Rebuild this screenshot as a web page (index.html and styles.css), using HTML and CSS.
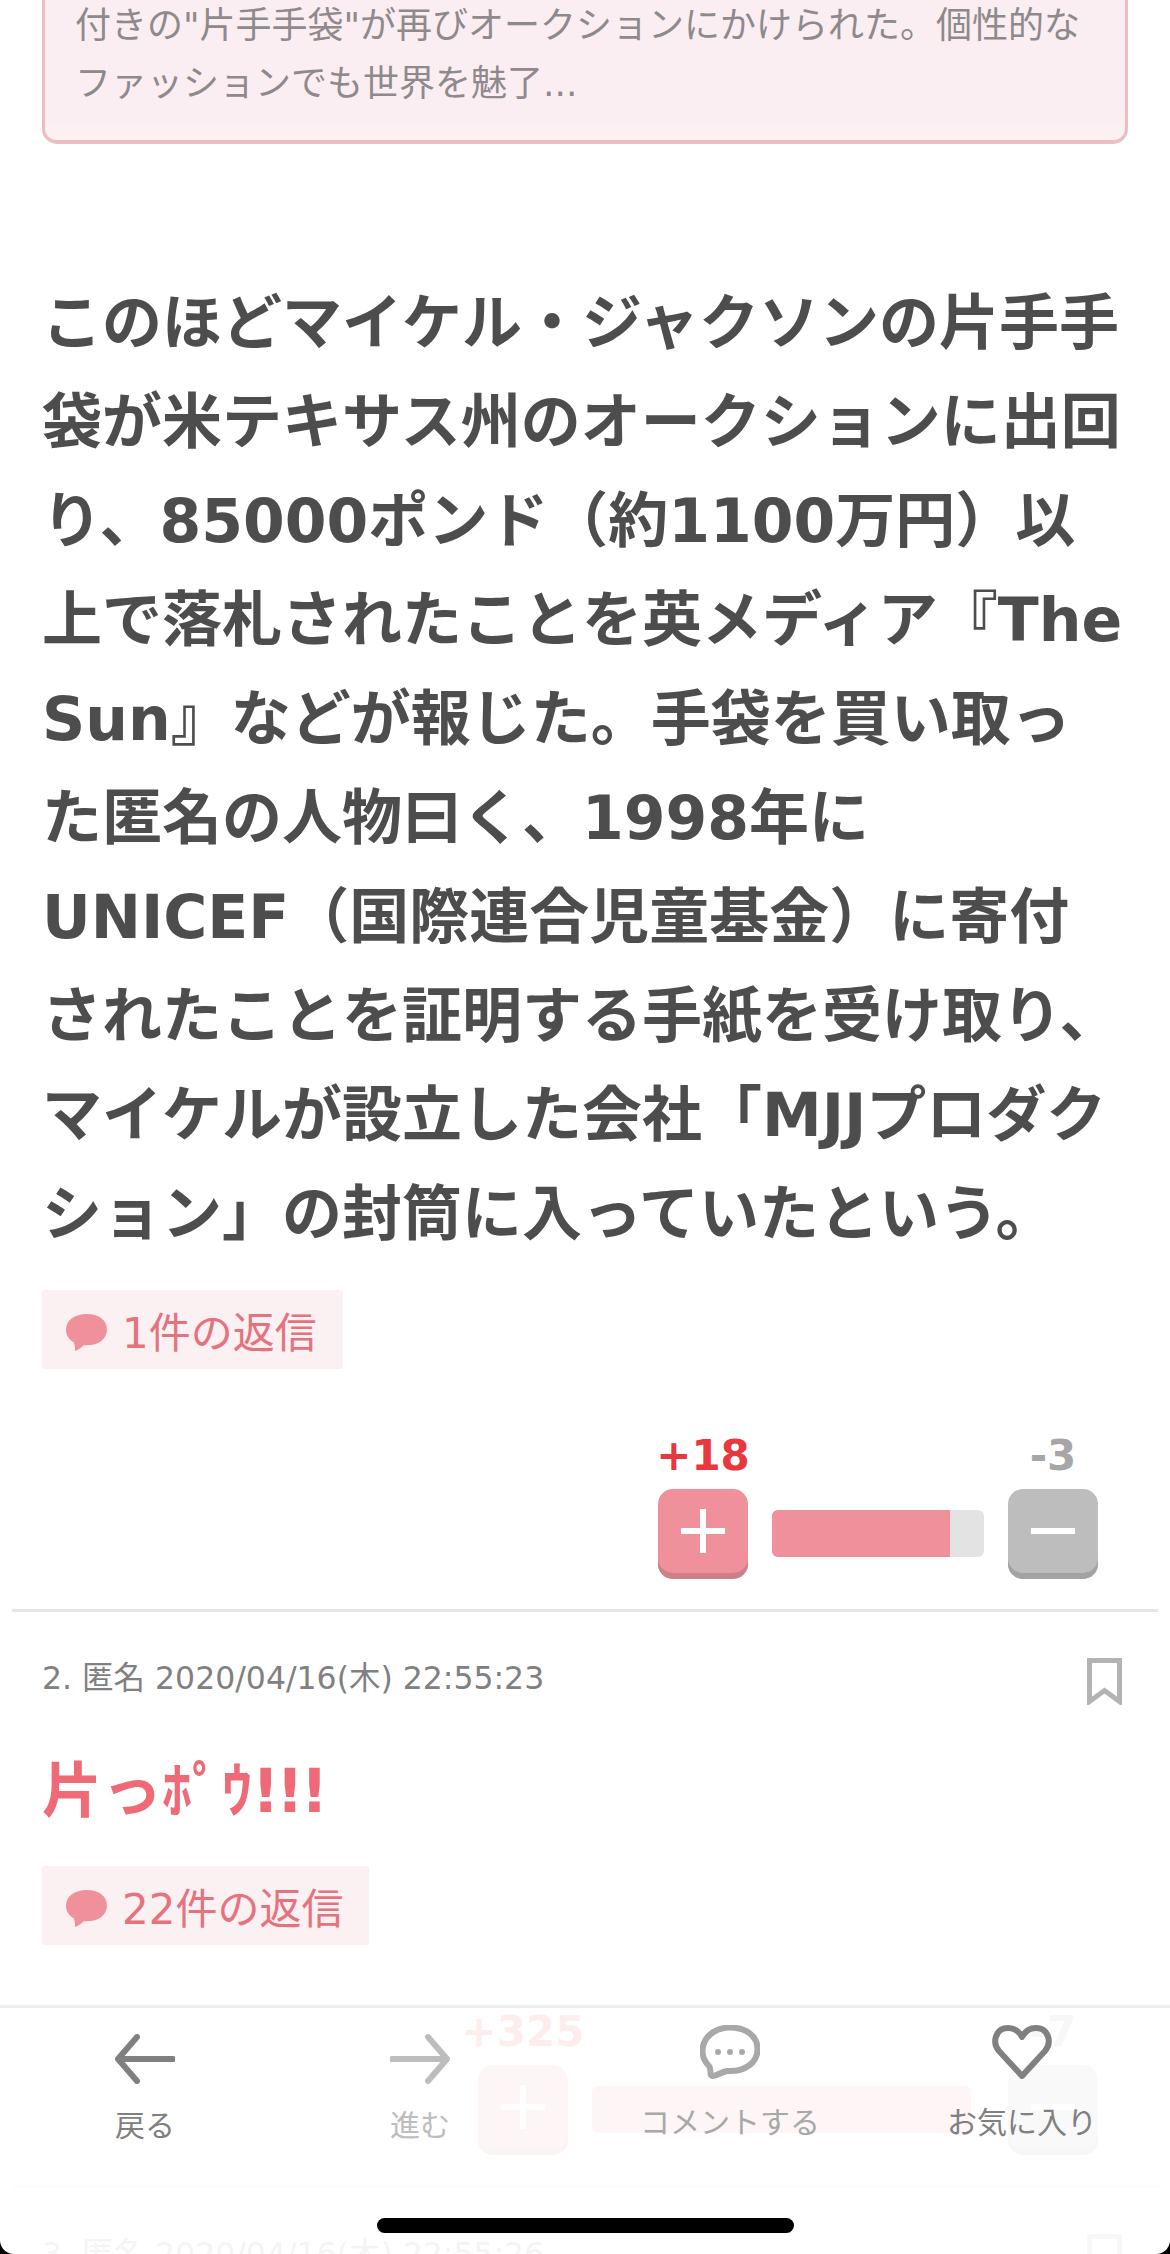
FILE: index.html
```html
<!DOCTYPE html>
<html lang="ja">
<head>
  <meta charset="UTF-8">
  <meta name="viewport" content="width=device-width, initial-scale=1.0">
  <title>コメント</title>
  <link rel="stylesheet" href="styles.css">
</head>
<body>
  <div class="screen">
    <!-- Comment 1 -->
    <div class="post post-first">
      <div class="quote">付きの"片手手袋"が再びオークションにかけられた。個性的な<br>ファッションでも世界を魅了...</div>
      <div class="comment-body">このほどマイケル・ジャクソンの片手手<br>袋が米テキサス州のオークションに出回<br>り、85000ポンド（約1100万円）以<br>上で落札されたことを英メディア『The<br>Sun』などが報じた。手袋を買い取っ<br>た匿名の人物曰く、1998年に<br>UNICEF（国際連合児童基金）に寄付<br>されたことを証明する手紙を受け取り、<br>マイケルが設立した会社「MJJプロダク<br>ション」の封筒に入っていたという。</div>
      <div class="reply-btn">
        <svg class="reply-icon" viewBox="0 0 44 40"><path d="M22 1C10 1 1 7.500 1 17c0 6 3 10.500 8 13 1 3 1.500 6 1 9 4-1.500 7-3.500 9-6 1 .1 2 .2 3 .2 12 0 21-6 21-16.200S34 1 22 1z"/></svg>
        1件の返信
      </div>
      <div class="vote">
        <div class="vote-col">
          <div class="vote-count plus-count">+18</div>
          <div class="vote-btn plus-btn"><svg viewBox="0 0 44 44"><path d="M0 22h44M22 0v44"/></svg></div>
        </div>
        <div class="vote-bar bar-small"><div class="vote-fill" style="width:84%"></div></div>
        <div class="vote-col">
          <div class="vote-count minus-count">-3</div>
          <div class="vote-btn minus-btn"><svg viewBox="0 0 44 44"><path d="M0 22h44"/></svg></div>
        </div>
      </div>
    </div>

    <!-- Comment 2 -->
    <div class="post">
      <div class="meta">
        <span>2. 匿名 2020/04/16(木) 22:55:23</span>
        <svg class="bookmark" viewBox="0 0 35 47"><path d="M2.500 2.500h30v41l-15-11-15 11z"/></svg>
      </div>
      <div class="comment-body highlight">片っﾎﾟｳ<span class="bang">!!!</span></div>
      <div class="reply-btn reply-after-highlight">
        <svg class="reply-icon" viewBox="0 0 44 40"><path d="M22 1C10 1 1 7.500 1 17c0 6 3 10.500 8 13 1 3 1.500 6 1 9 4-1.500 7-3.500 9-6 1 .1 2 .2 3 .2 12 0 21-6 21-16.200S34 1 22 1z"/></svg>
        22件の返信
      </div>
      <div class="vote">
        <div class="vote-col">
          <div class="vote-count plus-count">+325</div>
          <div class="vote-btn plus-btn"><svg viewBox="0 0 44 44"><path d="M0 22h44M22 0v44"/></svg></div>
        </div>
        <div class="vote-bar bar-large"><div class="vote-fill" style="width:100%"></div></div>
        <div class="vote-col">
          <div class="vote-count minus-count">-7</div>
          <div class="vote-btn minus-btn"><svg viewBox="0 0 44 44"><path d="M0 22h44"/></svg></div>
        </div>
      </div>
    </div>

    <!-- Comment 3 -->
    <div class="post">
      <div class="meta">
        <span>3. 匿名 2020/04/16(木) 22:55:26</span>
        <svg class="bookmark" viewBox="0 0 35 47"><path d="M2.500 2.500h30v41l-15-11-15 11z"/></svg>
      </div>
    </div>

    <!-- Bottom tab bar -->
    <div class="tabbar">
      <div class="tab tab-dark">
        <svg class="tab-icon arrow" viewBox="0 0 60 50"><path d="M58 25H3M22 3 3 25l19 22"/></svg>
        <span>戻る</span>
      </div>
      <div class="tab tab-light">
        <svg class="tab-icon arrow" viewBox="0 0 60 50"><path d="M2 25h55M38 3l19 22-19 22"/></svg>
        <span>進む</span>
      </div>
      <div class="tab tab-mid">
        <svg class="tab-icon" viewBox="0 0 60 54">
          <path d="M30 2.500C14 2.500 2.500 13 2.500 26c0 6 2.500 11 6.500 15 1.500 2 1.500 4 1.500 7 0 3 2 3.500 4.500 2.500 4-1.500 8-3.500 12-4.500 1 0 2 .1 3 .1C45 46 57.500 38 57.500 24 57.500 11 46 2.500 30 2.500z"/>
          <circle cx="18" cy="27" r="3" class="dot"/><circle cx="30" cy="27" r="3" class="dot"/><circle cx="42" cy="27" r="3" class="dot"/>
        </svg>
        <span>コメントする</span>
      </div>
      <div class="tab tab-dark">
        <svg class="tab-icon" viewBox="0 0 60 54"><path d="M30 51 7 26C0 18 3 3 16 3c6 0 11 3 14 9 3-6 8-9 14-9 13 0 16 15 9 23z"/></svg>
        <span>お気に入り</span>
      </div>
    </div>

    <div class="home-bar"></div>
    <div class="corner corner-left"></div>
    <div class="corner corner-right"></div>
  </div>
</body>
</html>
```

FILE: styles.css
```css
/* Global */
body {
  margin: 0;
  background: #fff;
  font-family: "DejaVu Sans", "Noto Sans CJK JP", sans-serif;
}

.screen {
  position: relative;
  width: 1170px;
  height: 2254px;
  overflow: hidden;
}

/* Comment */
.post {
  margin: 0 12px;
  padding: 40px 30px 30px;
  border-bottom: 3px solid #e6e6e6;
}

.post-first {
  padding-top: 0;
}

.quote {
  margin-top: -15px;
  padding: 9px 30px 27px;
  font-size: 36px;
  line-height: 58px;
  white-space: nowrap;
  color: #8e8a8c;
  background: linear-gradient(#fbeef2 88%, #fdf3ef);
  border: 3px solid #efbcc4;
  border-bottom-width: 4px;
  border-radius: 15px;
}

.post-first .comment-body {
  margin-top: 130px;
}

.comment-body {
  font-size: 60px;
  font-weight: bold;
  line-height: 99px;
  white-space: nowrap;
  color: #4d4d4d;
}

.highlight {
  margin-top: 45px;
  color: #ee6a77;
}

.bang {
  letter-spacing: -3px;
}

.meta {
  display: flex;
  justify-content: space-between;
  align-items: center;
  height: 45px;
  font-size: 31.500px;
  color: #808080;
}

.bookmark {
  width: 35px;
  height: 47px;
  margin: 14px 6px 0 0;
  fill: none;
  stroke: #b3b3b3;
  stroke-width: 5;
}

/* Reply button */
.reply-btn {
  display: flex;
  align-items: center;
  gap: 14px;
  width: fit-content;
  height: 79px;
  margin-top: 26px;
  padding: 0 26px 0 23px;
  font-size: 42px;
  color: #e5737f;
  background: #fbf0f2;
  border-radius: 3px;
}

.reply-after-highlight {
  margin-top: 25px;
}

.reply-icon {
  width: 43px;
  height: 39px;
  margin-top: 6px;
  fill: #f0909a;
}

/* Vote */
.vote {
  display: flex;
  justify-content: flex-end;
  align-items: flex-end;
  gap: 24px;
  margin: 63px 30px 0 0;
}

.vote-col {
  display: flex;
  flex-direction: column;
  align-items: center;
  width: 90px;
}

.vote-count {
  height: 48px;
  margin-bottom: 9px;
  font-size: 42px;
  font-weight: bold;
  line-height: 48px;
  white-space: nowrap;
}

.plus-count { color: #e8383f; }
.minus-count { color: #a6a6a6; }

.vote-btn {
  display: flex;
  justify-content: center;
  align-items: center;
  box-sizing: border-box;
  width: 90px;
  height: 90px;
  padding-bottom: 6px;
  border-radius: 15px;
}

.vote-btn svg {
  width: 44px;
  height: 44px;
  fill: none;
  stroke: #fff;
  stroke-width: 6;
}

.plus-btn {
  background: #f0909a;
  box-shadow: inset 0 -6px 0 #cc8189;
}

.minus-btn {
  background: #bdbdbd;
  box-shadow: inset 0 -6px 0 #a3a3a3;
}

.vote-bar {
  height: 47px;
  margin-bottom: 22px;
  overflow: hidden;
  background: #e3e3e3;
  border-radius: 6px;
}

.bar-small { width: 212px; }
.bar-large { width: 379px; margin-right: 13px; }

.vote-fill {
  height: 100%;
  background: #f0909a;
}

/* Tab bar */
.tabbar {
  position: absolute;
  left: 0;
  right: 0;
  top: 2005px;
  bottom: 0;
  display: grid;
  grid-template-columns: 290px 260px 360px 224px;
  background: rgba(255, 255, 255, 0.91);
  border-top: 3px solid #efefef;
}

.tab {
  display: flex;
  flex-direction: column;
  align-items: center;
  font-size: 30px;
  line-height: 40px;
  white-space: nowrap;
}

.tab-icon {
  width: 60px;
  height: 54px;
  margin-top: 17px;
  margin-bottom: 24px;
  fill: none;
  stroke: currentColor;
  stroke-width: 6;
  stroke-linecap: round;
  stroke-linejoin: round;
}

.tab-icon.arrow {
  height: 50px;
  margin-top: 26px;
  margin-bottom: 22px;
}

.tab-icon .dot {
  fill: currentColor;
  stroke: none;
}

.tab-dark { color: #808080; }
.tab-mid { color: #a8a8a8; }
.tab-light { color: #bdbdbd; }

/* Home indicator and screen corners */
.home-bar {
  position: absolute;
  left: 377px;
  top: 2218px;
  width: 417px;
  height: 15px;
  background: #000;
  border-radius: 8px;
}

.corner {
  position: absolute;
  bottom: 0;
  width: 14px;
  height: 14px;
}

.corner-left {
  left: 0;
  background: radial-gradient(circle at 100% 0, transparent 13.500px, #000 14.500px);
}

.corner-right {
  right: 0;
  background: radial-gradient(circle at 0 0, transparent 13.500px, #000 14.500px);
}
```
